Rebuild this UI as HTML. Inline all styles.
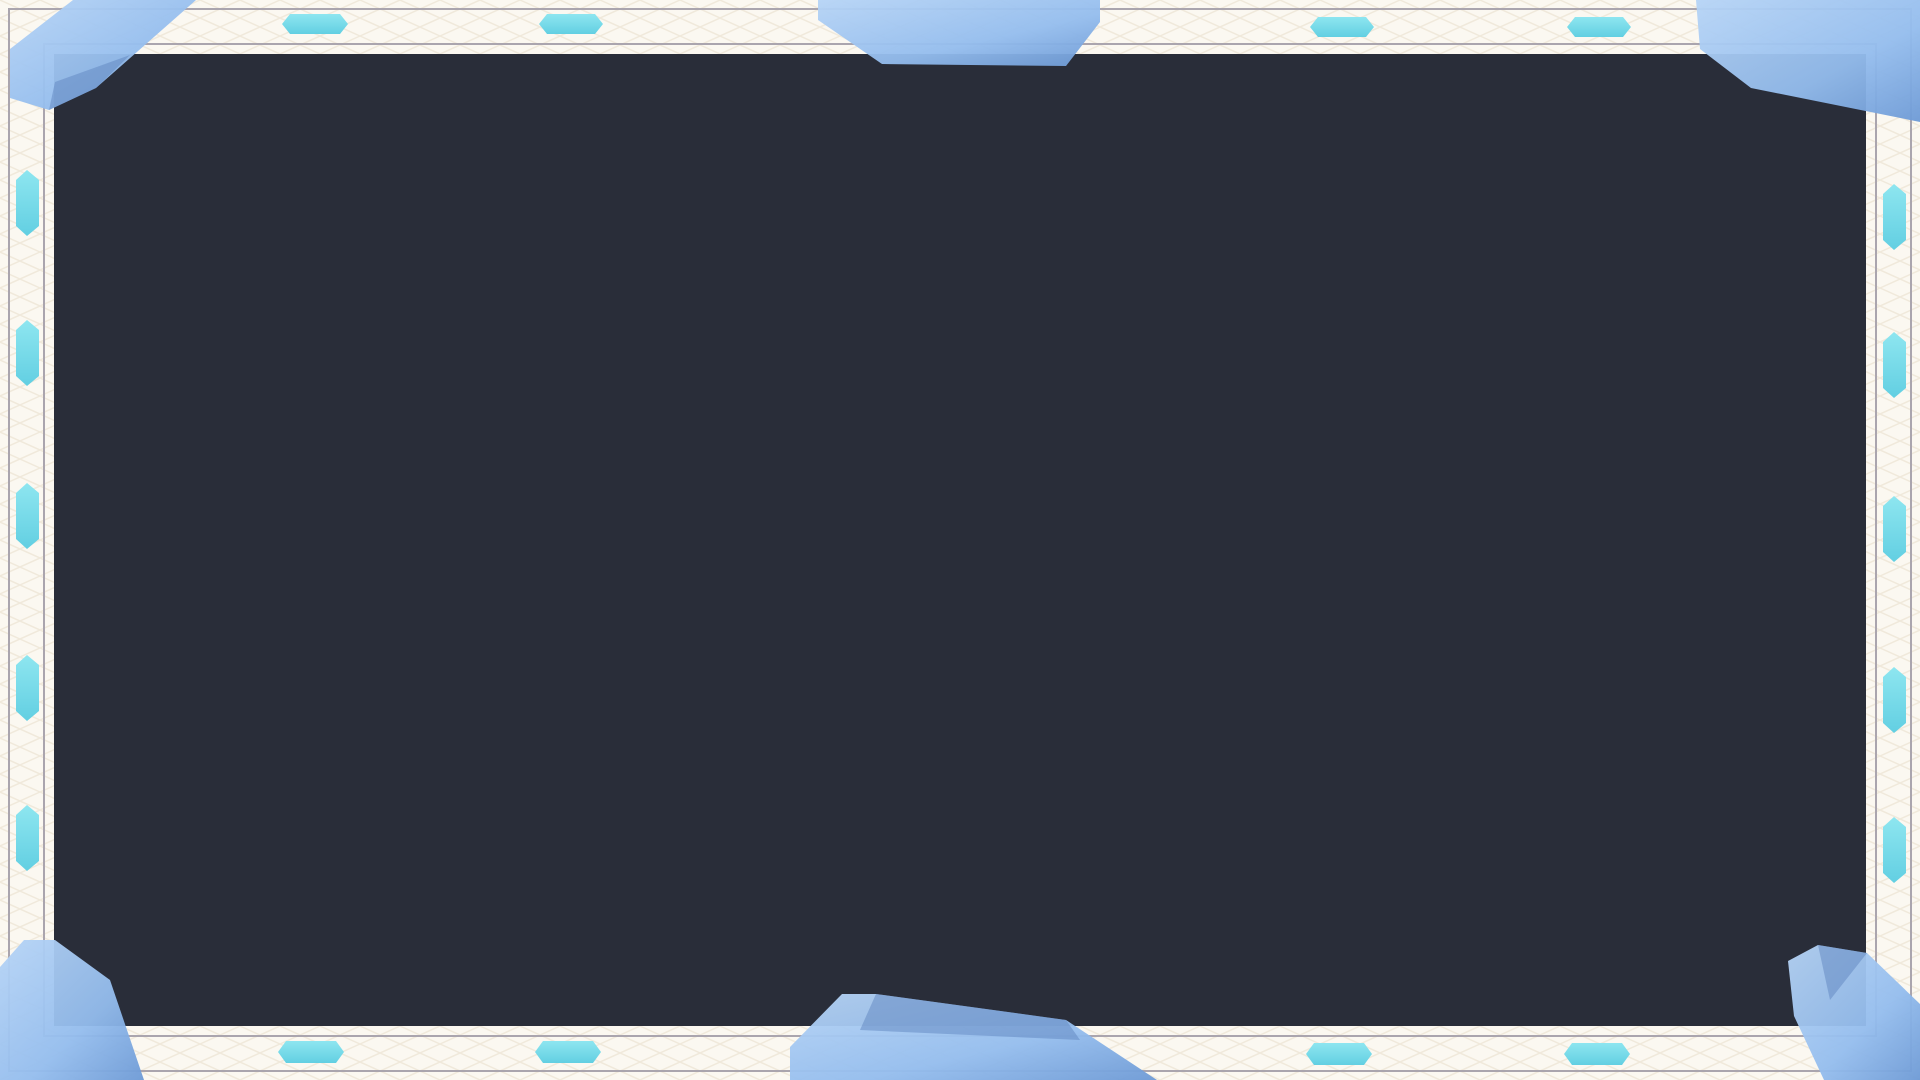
<!DOCTYPE html>
<html><head><meta charset="utf-8"><style>
html,body{margin:0;padding:0;width:1920px;height:1080px;overflow:hidden;background:#fbf8f1}
svg{display:block}
</style></head><body>
<svg width="1920" height="1080" viewBox="0 0 1920 1080" xmlns="http://www.w3.org/2000/svg">
<defs>
<pattern id="lat" width="80" height="36" patternUnits="userSpaceOnUse">
<path d="M0 0L80 36M80 0L0 36M40 0L0 18L40 36L80 18Z" stroke="#e9dfcc" stroke-width="1.5" fill="none"/>
</pattern>
<linearGradient id="cr" x1="0" y1="0" x2="1" y2="1">
<stop offset="0" stop-color="#b6d4f6"/><stop offset="0.6" stop-color="#94bdee"/><stop offset="1" stop-color="#6d9ad6"/>
</linearGradient>
<linearGradient id="gm" x1="0" y1="0" x2="0" y2="1">
<stop offset="0" stop-color="#8ee6f0"/><stop offset="1" stop-color="#62cfe2"/>
</linearGradient>
</defs>
<rect width="1920" height="1080" fill="#fbf8f1"/>
<rect width="1920" height="1080" fill="url(#lat)" opacity="0.6"/>
<g fill="none" stroke="#aaa5ae" stroke-width="2">
<rect x="9" y="9" width="1902" height="1062"/>
<rect x="44" y="44" width="1832" height="992"/>
</g>
<rect x="54" y="54" width="1812" height="972" fill="#292d39"/>
<g fill="url(#gm)">
<path d="M290 14h50l8 10-8 10h-50l-8-10z"/><path d="M547 14h48l8 10-8 10h-48l-8-10z"/>
<path d="M1318 17h48l8 10-8 10h-48l-8-10z"/><path d="M1575 17h48l8 10-8 10h-48l-8-10z"/>
<path d="M286 1041h50l8 11-8 11h-50l-8-11z"/><path d="M543 1041h50l8 11-8 11h-50l-8-11z"/>
<path d="M1314 1043h50l8 11-8 11h-50l-8-11z"/><path d="M1572 1043h50l8 11-8 11h-50l-8-11z"/>
<path d="M27 170l12 10v46l-12 10-11-10v-46z"/><path d="M27 320l12 10v46l-12 10-11-10v-46z"/><path d="M27 483l12 10v46l-12 10-11-10v-46z"/><path d="M27 655l12 10v46l-12 10-11-10v-46z"/><path d="M27 805l12 10v46l-12 10-11-10v-46z"/>
<path d="M1894 184l12 10v46l-12 10-11-10v-46z"/><path d="M1894 332l12 10v46l-12 10-11-10v-46z"/><path d="M1894 496l12 10v46l-12 10-11-10v-46z"/><path d="M1894 667l12 10v46l-12 10-11-10v-46z"/><path d="M1894 817l12 10v46l-12 10-11-10v-46z"/>
</g>
<g fill="url(#cr)" opacity="0.95">
<path d="M10 49L73 0H196L96 88L49 110L10 98Z"/>
<path d="M818 0H1100V22L1066 66L882 64L818 20Z"/>
<path d="M1696 0H1920V122L1751 88L1700 49Z"/>
<path d="M0 967L24 940H55L110 980L144 1080H0Z"/>
<path d="M790 1047L842 994H876L1066 1020L1157 1080H790Z"/>
<path d="M1788 961L1818 945L1867 953L1920 1004V1080H1824L1794 1016Z"/>
</g>
<g fill="#5f86bf" opacity="0.5">
<path d="M96 88L49 110L55 82L130 55Z"/>
<path d="M876 994L1066 1020L1080 1040L860 1030Z"/>
<path d="M1818 945L1867 953L1830 1000Z"/>
</g>
</svg>
</body></html>
